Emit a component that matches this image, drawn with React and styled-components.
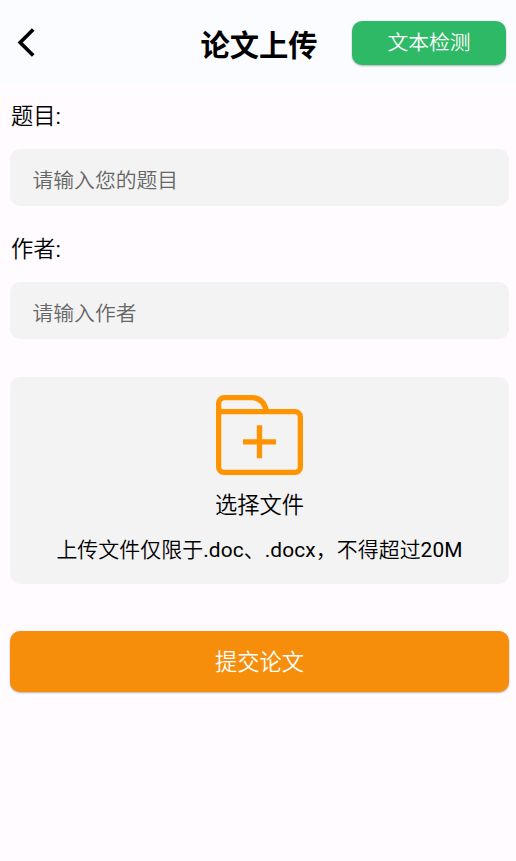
import React from 'react';
import styled, { createGlobalStyle } from 'styled-components';

const Global = createGlobalStyle`
  * { box-sizing: border-box; }
  body { margin: 0; background: #fffbff; }
  button, input { font: inherit; border: 0; }
`;

const Page = styled.main`
  min-height: 861px;
  background: #fffbff;
  color: #000;
  font-family: Roboto, "Noto Sans CJK SC", sans-serif;
  font-size: 22.3px;
  font-weight: 350;
  line-height: 30px;
`;

const Header = styled.header`
  height: 84px;
  padding: 2px 10px 0 16px;
  display: grid;
  grid-template-columns: 154px 1fr 154px;
  align-items: center;
  background: #fbfcff;
`;

const BackButton = styled.button`
  width: 20px;
  height: 30px;
  padding: 0;
  background: none;
  svg { display: block; }
`;

const Title = styled.h1`
  margin: 5px 0 0;
  padding-right: 4px;
  display: flex;
  justify-content: center;
  font-size: 29.3px;
  font-weight: 700;
  line-height: 40px;
  white-space: nowrap;
`;

const CheckButton = styled.button`
  height: 44px;
  padding: 0;
  border-radius: 10px;
  background: #2eb966;
  color: #fff;
  font-size: 20.8px;
  box-shadow: 0 1px 2px rgba(0, 0, 0, 0.3);
`;

const Form = styled.form`
  padding: 17px 7px 0 10px;
  display: flex;
  flex-direction: column;
`;

const Field = styled.label`
  height: 133px;
  display: flex;
  flex-direction: column;
  gap: 18px;
`;

const Label = styled.span`
  padding-left: 1px;
`;

const Latin = styled.span`
  font-weight: 400;
`;

const Input = styled.input`
  height: 57px;
  padding: 7px 23px 0 22.500px;
  border-radius: 10px;
  background: #f3f3f3;
  font-size: 20.8px;
  outline: 0;
  &::placeholder { color: #666; opacity: 1; }
`;

const Upload = styled.section`
  height: 207px;
  margin-top: 10px;
  padding-top: 18px;
  display: flex;
  flex-direction: column;
  align-items: center;
  border-radius: 10px;
  background: #f3f3f3;
`;

const UploadLabel = styled.span`
  margin-top: 15px;
`;

const Hint = styled.span`
  margin-top: 15px;
  font-size: 20.9px;
  letter-spacing: 0.09px;
  white-space: nowrap;
`;

const Submit = styled.button`
  height: 61px;
  margin-top: 47px;
  padding: 0;
  border-radius: 10px;
  background: #f78e0b;
  color: #fff;
  font-size: 22.3px;
  box-shadow: 0 1px 2px rgba(0, 0, 0, 0.3);
`;

const BackIcon = () => (
  <svg width="20" height="30" viewBox="0 0 20 30" fill="none" stroke="#000" strokeWidth="3.7">
    <path d="M17.200 1.500 4.200 14.500l13 13" />
  </svg>
);

const FolderIcon = () => (
  <svg width="87" height="80" viewBox="0 0 87 80" fill="none" stroke="#ff9300" strokeWidth="5.300">
    <path d="M2.650 17V8.150a5.500 5.500 0 0 1 5.500-5.500H36c7.500 0 12.500 5 14.500 13.500M2.650 16.650H79a5.350 5.350 0 0 1 5.350 5.350v50a5.350 5.350 0 0 1-5.350 5.350H8a5.350 5.350 0 0 1-5.350-5.350V16.650M43.500 30.300v33M27 46.800h33" />
  </svg>
);

const TextField = ({ label, placeholder }) => (
  <Field>
    <Label>{label}<Latin>:</Latin></Label>
    <Input placeholder={placeholder} />
  </Field>
);

export default function App() {
  return (
    <>
      <Global />
      <Page>
        <Header>
          <BackButton type="button" aria-label="返回"><BackIcon /></BackButton>
          <Title>论文上传</Title>
          <CheckButton type="button">文本检测</CheckButton>
        </Header>
        <Form>
          <TextField label="题目" placeholder="请输入您的题目" />
          <TextField label="作者" placeholder="请输入作者" />
          <Upload>
            <FolderIcon />
            <UploadLabel>选择文件</UploadLabel>
            <Hint>
              上传文件仅限于<Latin>.doc</Latin>、<Latin>.docx</Latin>，不得超过<Latin>20M</Latin>
            </Hint>
          </Upload>
          <Submit type="button">提交论文</Submit>
        </Form>
      </Page>
    </>
  );
}
